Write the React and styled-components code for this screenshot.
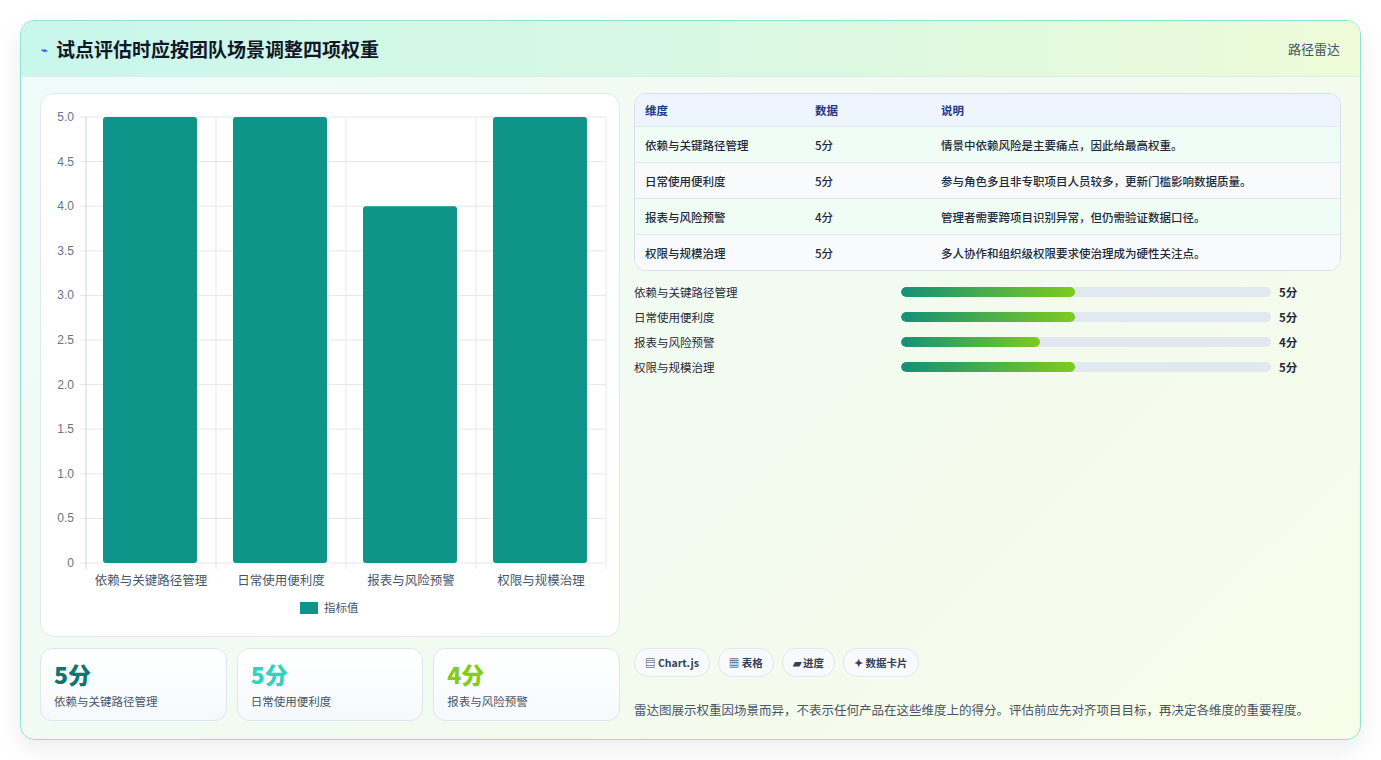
import React from "react";
import styled, { createGlobalStyle } from "styled-components";

const G = createGlobalStyle`
  body { margin: 0; background: #fff; font-family: "Noto Sans CJK SC", "Noto Sans", sans-serif; }
`;
const Page = styled.div`padding: 20px 20px 20px 20px; width: 1381px; box-sizing: border-box;`;
const Card = styled.div`
  width: 1341px; height: 720px; box-sizing: border-box; border: 1px solid #8fe3d0; border-radius: 14px;
  background: linear-gradient(135deg, #effcfa 0%, #f3fbef 60%, #f7fde9 100%);
  box-shadow: 0 8px 24px rgba(0,0,0,0.08); overflow: hidden; display: flex; flex-direction: column;
`;
const Header = styled.div`
  height: 55px; flex: none; display: flex; align-items: center; justify-content: space-between; padding: 0 20px 0 20px;
  background: linear-gradient(90deg, #c9f7ec 0%, #dcf8e2 60%, #eefbd8 100%); border-bottom: 1px solid #d8eee6;
`;
const Title = styled.h1`margin: 0; font-size: 19px; font-weight: 700; color: #111827; display: flex; align-items: center; gap: 8px;`;
const Tag = styled.span`font-size: 13px; color: #475569;`;
const Body = styled.div`flex: 1; display: grid; grid-template-columns: 580px 1fr; gap: 14px; padding: 16px 19px 19px 19px;`;
const Col = styled.div`display: flex; flex-direction: column; gap: 11px;`;
const ChartCard = styled.div`height: 544px; box-sizing: border-box; background: #fff; border: 1px solid #e2e8f0; border-radius: 14px;`;
const Stats = styled.div`display: grid; grid-template-columns: repeat(3, 1fr); gap: 10px; height: 73px;`;
const Stat = styled.div`border: 1px solid #dde7f0; border-radius: 12px; background: linear-gradient(#fff, #f6f9fc); padding: 10px 13px; box-sizing: border-box;`;
const StatNum = styled.div`font-size: 23px; font-weight: 800; color: ${p => p.c}; line-height: 30px;`;
const StatLbl = styled.div`font-size: 11.5px; color: #475569; margin-top: 4px;`;
const Table = styled.div`border: 1px solid #d5e0ea; border-radius: 12px; overflow: hidden; background: #fff;`;
const Row = styled.div`
  display: grid; grid-template-columns: 170px 126px 1fr; height: ${p => p.h ? 32 : 35}px; align-items: center; padding: 0 10px;
  font-size: 11.5px; background: ${p => p.h ? "#eef5fe" : p.alt ? "#f8fafc" : "#f0fdf7"};
  color: ${p => p.h ? "#1e3a8a" : "#1f2937"}; font-weight: ${p => p.h ? 700 : 500};
  border-top: ${p => p.first ? "none" : "1px solid #e2e8f0"};
`;
const Bars = styled.div`display: flex; flex-direction: column; gap: 7px; margin-top: 1px;`;
const BarRow = styled.div`display: grid; grid-template-columns: 267px 370px 1fr; align-items: center; height: 18px; font-size: 11.5px; color: #1f2937;`;
const Track = styled.div`height: 10px; border-radius: 5px; background: #e2e8f0; overflow: hidden;`;
const Fill = styled.div`height: 100%; border-radius: 5px; background: linear-gradient(90deg, #149078, #7ecb1f);`;
const Val = styled.span`font-weight: 700; padding-left: 8px;`;
const Chips = styled.div`display: flex; gap: 8px; margin-top: auto;`;
const Chip = styled.span`font-size: 10.5px; font-weight: 600; color: #334155; background: #f8fafc; border: 1px solid #dfe7ef; border-radius: 14px; padding: 6px 10px;`;
const Note = styled.p`margin: 12px 0 2px; font-size: 12.5px; color: #475569;`;

const cats = ["依赖与关键路径管理", "日常使用便利度", "报表与风险预警", "权限与规模治理"];
const vals = [5, 5, 4, 5];
const notes = ["情景中依赖风险是主要痛点，因此给最高权重。", "参与角色多且非专职项目人员较多，更新门槛影响数据质量。", "管理者需要跨项目识别异常，但仍需验证数据口径。", "多人协作和组织级权限要求使治理成为硬性关注点。"];

function Chart() {
  const x0 = 45, x1 = 565, y0 = 23, y1 = 469;
  const ticks = [0, 0.5, 1, 1.5, 2, 2.5, 3, 3.5, 4, 4.5, 5];
  const cw = (x1 - x0) / 4;
  const font = '"Liberation Sans", "Noto Sans CJK SC", sans-serif';
  return (
    <svg width="578" height="542" style={{ display: "block" }}>
      {ticks.map(t => { const y = y1 - (t / 5) * (y1 - y0); return (
        <g key={t}><line x1={x0 - 6} x2={x1} y1={y} y2={y} stroke="#e5e7eb" />
        <text x={x0 - 12} y={y + 4} fontSize="12" fill="#64748b" textAnchor="end" fontFamily={font}>{t === 0 ? "0" : t.toFixed(1)}</text></g>); })}
      {[0, 1, 2, 3, 4].map(i => <line key={i} x1={x0 + i * cw} x2={x0 + i * cw} y1={y0} y2={y1 + 6} stroke={i === 0 ? "#cbd5e1" : "#e5e7eb"} />)}
      {vals.map((v, i) => { const h = (v / 5) * (y1 - y0); return <rect key={i} x={x0 + i * cw + 17} y={y1 - h} width={94} height={h} rx="3" fill="#0e9488" />; })}
      {cats.map((c, i) => <text key={c} x={x0 + i * cw + cw / 2} y={491} fontSize="12.5" fill="#475569" textAnchor="middle" fontFamily={font}>{c}</text>)}
      <rect x="259" y="508" width="18" height="12" fill="#0e9488" />
      <text x="283" y="518" fontSize="11.5" fill="#475569" fontFamily={font}>指标值</text>
    </svg>
  );
}

export default function App() {
  return (
    <Page><G />
      <Card>
        <Header>
          <Title><span style={{ fontSize: 11, color: "#2563eb" }}>⌁</span>试点评估时应按团队场景调整四项权重</Title>
          <Tag>路径雷达</Tag>
        </Header>
        <Body>
          <Col>
            <ChartCard><Chart /></ChartCard>
            <Stats>
              <Stat><StatNum c="#0f766e">5分</StatNum><StatLbl>依赖与关键路径管理</StatLbl></Stat>
              <Stat><StatNum c="#2dd4bf">5分</StatNum><StatLbl>日常使用便利度</StatLbl></Stat>
              <Stat><StatNum c="#84cc16">4分</StatNum><StatLbl>报表与风险预警</StatLbl></Stat>
            </Stats>
          </Col>
          <Col>
            <Table>
              <Row h first><span>维度</span><span>数据</span><span>说明</span></Row>
              {cats.map((c, i) => <Row key={c} alt={i % 2 === 1}><span>{c}</span><span>{vals[i]}分</span><span>{notes[i]}</span></Row>)}
            </Table>
            <Bars>
              {cats.map((c, i) => <BarRow key={c}><span>{c}</span><Track><Fill style={{ width: `${vals[i] * 9.4}%` }} /></Track><Val>{vals[i]}分</Val></BarRow>)}
            </Bars>
            <Chips><Chip>▤ Chart.js</Chip><Chip>▦ 表格</Chip><Chip>▰ 进度</Chip><Chip>✦ 数据卡片</Chip></Chips>
            <Note>雷达图展示权重因场景而异，不表示任何产品在这些维度上的得分。评估前应先对齐项目目标，再决定各维度的重要程度。</Note>
          </Col>
        </Body>
      </Card>
    </Page>
  );
}
